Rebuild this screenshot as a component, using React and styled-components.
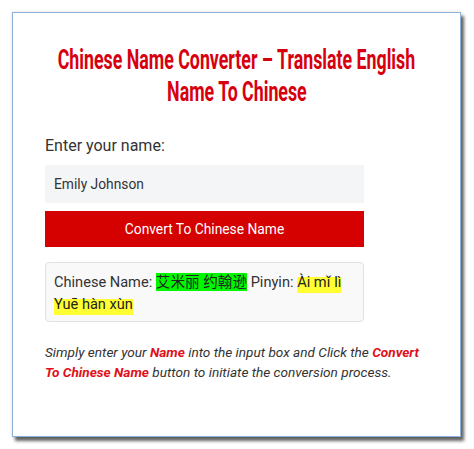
import React from "react";
import styled, { createGlobalStyle } from "styled-components";

const Global = createGlobalStyle`
  html, body { margin: 0; padding: 0; background: #ffffff; }
  body { font-family: Roboto, "Noto Sans CJK SC", sans-serif; color: #333; }
  * { box-sizing: border-box; }
`;

const Page = styled.div`
  padding: 12px 13px 12px 12px;
  width: 474px;
  height: 449px;
`;

const Card = styled.div`
  width: 449px;
  height: 425px;
  border: 1px solid #8db0da;
  background: #fff;
  box-shadow: 3px 4px 3px rgba(0, 0, 0, 0.6), 0 0 4px rgba(0, 0, 0, 0.12);
  padding: 31px 24px 0 32px;
  display: flex;
  flex-direction: column;
`;

const Title = styled.h1`
  margin: 0 0 26px;
  padding-right: 8px;
  display: flex;
  flex-direction: column;
  align-items: center;
  font-family: Roboto, sans-serif;
  font-weight: 700;
  font-size: 28px;
  line-height: 32px;
  color: #d7000f;
  white-space: nowrap;
`;

const TitleLine = styled.span`
  display: inline-block;
  transform: scaleX(${(p) => p.$sx});
  transform-origin: center;
`;

const Label = styled.label`
  display: block;
  font-size: 16px;
  line-height: 24px;
  color: #333;
  margin-bottom: 7px;
`;

const Form = styled.div`
  width: 319px;
  display: flex;
  flex-direction: column;
`;

const Input = styled.input`
  height: 38px;
  border: none;
  outline: none;
  background: #f4f5f7;
  padding: 0 9px;
  font-family: Roboto, sans-serif;
  font-size: 13.8px;
  color: #333;
  margin-bottom: 8px;
`;

const Button = styled.button`
  height: 36px;
  border: none;
  background: #d50000;
  color: #fff;
  font-family: Roboto, sans-serif;
  font-size: 13.8px;
  cursor: pointer;
  margin-bottom: 15px;
`;

const Result = styled.div`
  border: 1px solid #e2e2e2;
  border-radius: 4px;
  background: #f9f9f9;
  padding: 8px 8px 6px;
  font-size: 14.6px;
  line-height: 22px;
  color: #333;
  min-height: 60px;
`;

const Mark = styled.span`
  background: ${(p) =>
    p.$tone === "green"
      ? "#00f700"
      : "linear-gradient(to bottom, transparent 22%, #ffff33 22%)"};
  padding-bottom: ${(p) => (p.$tone === "green" ? "0" : "2px")};
  color: #222;
`;

const Note = styled.p`
  margin: 21px 0 0;
  font-size: 13.6px;
  line-height: 19.6px;
  font-style: italic;
  color: #333;
`;

const Em = styled.strong`
  color: #e0101a;
  font-weight: 700;
`;

export default function App() {
  return (
    <>
      <Global />
      <Page>
        <Card>
          <Title>
            <TitleLine $sx={0.635}>Chinese Name Converter – Translate English</TitleLine>
            <TitleLine $sx={0.635}>Name To Chinese</TitleLine>
          </Title>
          <Form>
            <Label htmlFor="name">Enter your name:</Label>
            <Input id="name" defaultValue="Emily Johnson" />
            <Button>Convert To Chinese Name</Button>
            <Result>
              Chinese Name: <Mark $tone="green">艾米丽 约翰逊</Mark> Pinyin:{" "}
              <Mark $tone="yellow">Ài mǐ lì Yuē hàn xùn</Mark>
            </Result>
          </Form>
          <Note>
            Simply enter your <Em>Name</Em> into the input box and Click the{" "}
            <Em>Convert To Chinese Name</Em> button to initiate the conversion process.
          </Note>
        </Card>
      </Page>
    </>
  );
}
